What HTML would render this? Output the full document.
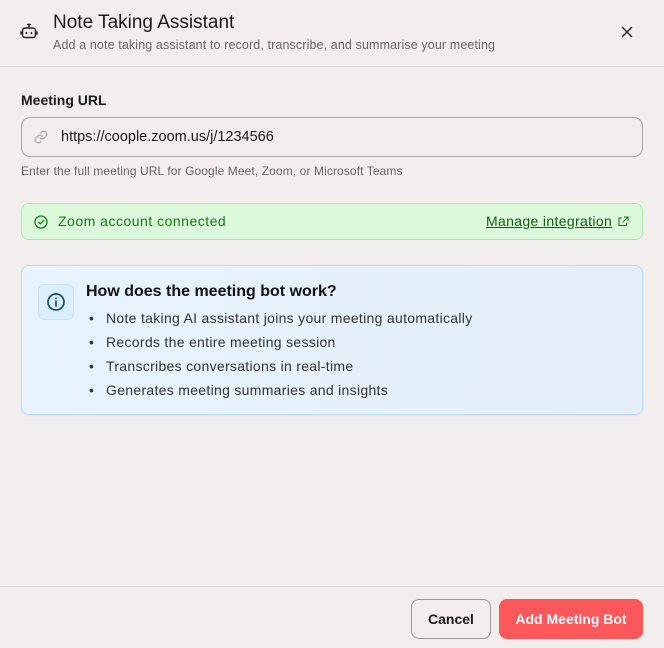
<!DOCTYPE html>
<html><head><meta charset="utf-8"><style>
*{box-sizing:border-box;margin:0;padding:0}
body{width:664px;height:648px;background:#f2eeed;font-family:"Liberation Sans",sans-serif;color:#1a1a1a;position:relative;overflow:hidden}
.abs{position:absolute;white-space:nowrap}
</style></head><body>
<svg class="abs" style="left:20px;top:22px" width="18" height="18" viewBox="0 0 18 18" fill="none" stroke="#222" stroke-width="1.5" stroke-linecap="round"><rect x="2.5" y="6" width="13" height="9.5" rx="2.5"/><path d="M9 6V3.5M7.5 2.5h3"/><path d="M6.5 10.5v1M11.5 10.5v1M1 10v2M17 10v2"/></svg>
<div class="abs" style="left:53px;top:12px;font-size:19px;color:#1a1a1a">Note Taking Assistant</div>
<div class="abs" style="left:53px;top:38px;font-size:12.5px;color:#666;letter-spacing:0.12px">Add a note taking assistant to record, transcribe, and summarise your meeting</div>
<svg class="abs" style="left:621px;top:26px" width="12" height="12" viewBox="0 0 12 12" stroke="#222" stroke-width="1.5" stroke-linecap="round"><path d="M1.5 1.5l9 9M10.5 1.5l-9 9"/></svg>
<div class="abs" style="left:0;top:66px;width:664px;height:1px;background:#ddd9d8"></div>

<div class="abs" style="left:21px;top:92px;font-size:14px;font-weight:bold;color:#1a1a1a">Meeting URL</div>
<div class="abs" style="left:21px;top:117px;width:622px;height:40px;border:1px solid #a9a5a4;border-radius:9px"></div>
<svg class="abs" style="left:33px;top:129px" width="16" height="16" viewBox="0 0 16 16" fill="none" stroke="#aaa" stroke-width="1.3" stroke-linecap="round"><path d="M7 9a3 3 0 0 0 4.2 0l2-2a3 3 0 0 0-4.2-4.2l-1 1"/><path d="M9 7a3 3 0 0 0-4.2 0l-2 2a3 3 0 0 0 4.2 4.2l1-1"/></svg>
<div class="abs" style="left:61px;top:129px;font-size:14.5px;color:#1a1a1a">https://coople.zoom.us/j/1234566</div>
<div class="abs" style="left:21px;top:164px;font-size:12px;color:#666;letter-spacing:0.1px">Enter the full meeting URL for Google Meet, Zoom, or Microsoft Teams</div>

<div class="abs" style="left:21px;top:203px;width:622px;height:37px;border:1px solid #a8eba8;background:#dcfadb;border-radius:8px"></div>
<svg class="abs" style="left:34px;top:215px" width="14" height="14" viewBox="0 0 14 14" fill="none" stroke="#137a13" stroke-width="1.3" stroke-linecap="round" stroke-linejoin="round"><circle cx="7" cy="7" r="6"/><path d="M4.5 7.2l1.8 1.7 3.3-3.5"/></svg>
<div class="abs" style="left:58px;top:213px;font-size:14px;color:#137a13;letter-spacing:0.5px">Zoom account connected</div>
<div class="abs" style="left:486px;top:213px;font-size:14px;color:#0f5f0f;text-decoration:underline;letter-spacing:0.35px">Manage integration</div>
<svg class="abs" style="left:618px;top:216px" width="11" height="11" viewBox="0 0 11 11" fill="none" stroke="#137a13" stroke-width="1.1"><path d="M6 1h4v4M10 1L5 6M8.5 7v2.5h-7.5v-7.5H4"/></svg>

<div class="abs" style="left:21px;top:265px;width:622px;height:150px;border:1px solid #b5dcf5;background:linear-gradient(90deg,#e7f3fd,#e3eef8);border-radius:8px;box-shadow:0 1px 2px rgba(0,0,0,.06)"></div>
<div class="abs" style="left:38px;top:284px;width:36px;height:36px;border-radius:7px;background:#dbeefd;border:1px solid #cfe1ef"></div>
<svg class="abs" style="left:46px;top:292px" width="20" height="20" viewBox="0 0 20 20" fill="none" stroke="#134d7a" stroke-width="1.7" stroke-linecap="round"><circle cx="10" cy="10" r="8"/><path d="M10 9v5M10 6.2v.1"/></svg>
<div class="abs" style="left:86px;top:283px;font-size:16px;font-weight:bold;color:#111">How does the meeting bot work?</div>
<div class="abs" style="left:106px;top:306px;font-size:14px;color:#333;line-height:24px;letter-spacing:0.3px">
<div>Note taking AI assistant joins your meeting automatically</div>
<div>Records the entire meeting session</div>
<div>Transcribes conversations in real-time</div>
<div>Generates meeting summaries and insights</div>
</div>
<div class="abs" style="left:89px;top:306px;font-size:14px;color:#333;line-height:24px">
<div>•</div><div>•</div><div>•</div><div>•</div>
</div>

<div class="abs" style="left:0;top:586px;width:664px;height:1px;background:#ddd9d8"></div>
<div class="abs" style="left:411px;top:599px;width:80px;height:40px;border:1px solid #9a9695;border-radius:8px;font-size:14px;font-weight:bold;color:#1a1a1a;text-align:center;line-height:38px">Cancel</div>
<div class="abs" style="left:499px;top:599px;width:144px;height:40px;background:#fc575a;border-radius:8px;font-size:14px;font-weight:bold;color:#fff;text-align:center;line-height:40px">Add Meeting Bot</div>
</body></html>
